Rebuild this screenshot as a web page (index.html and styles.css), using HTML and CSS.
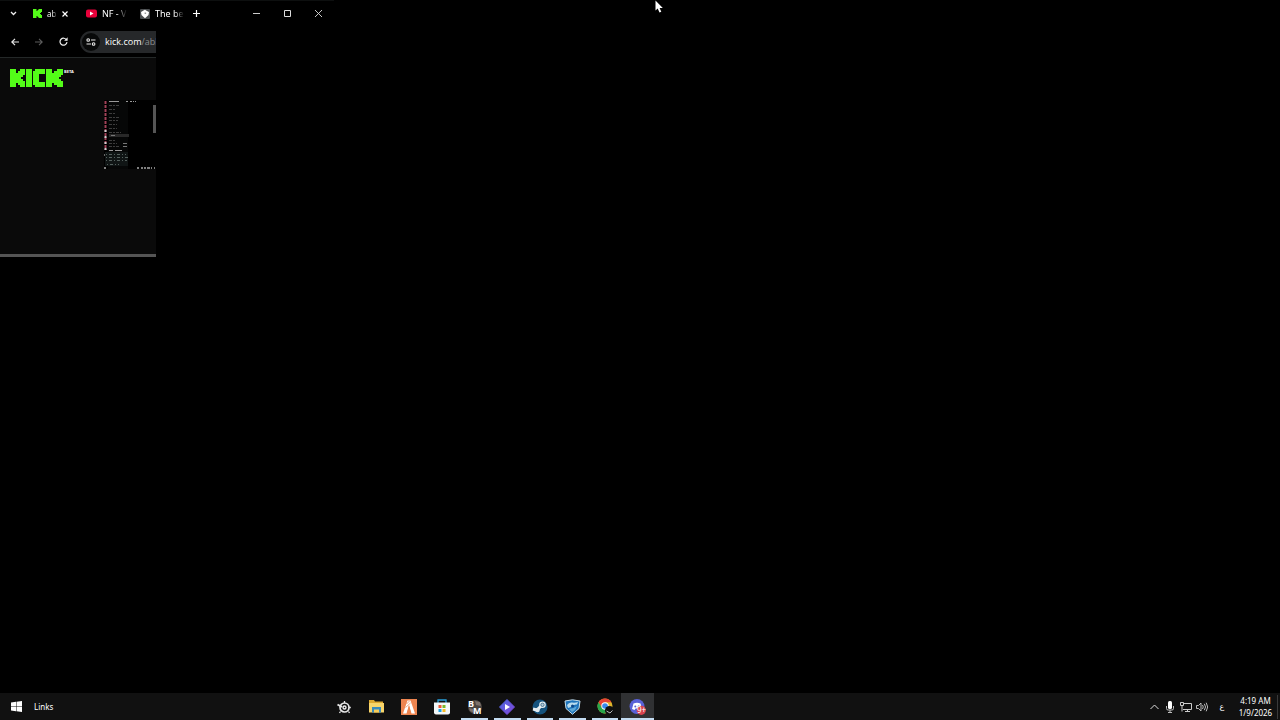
FILE: index.html
```html
<!DOCTYPE html>
<html lang="en">
<head>
    <meta charset="UTF-8">
    <meta name="viewport" content="width=device-width, initial-scale=1.0">
    <title>Desktop</title>
    <link rel="stylesheet" href="styles.css">
</head>
<body>
    <main class="desktop">
        <section class="browser">
            <!-- Tab strip -->
            <header class="tab-strip">
                <button class="tab-search" aria-label="Search tabs">
                    <svg width="7" height="5" viewBox="0 0 7 5"><path d="M1 1l2.5 2.5L6 1" fill="none" stroke="#eee" stroke-width="1.3"/></svg>
                </button>
                <div class="tab tab-kick">
                    <svg width="9" height="9" viewBox="0 0 9 9"><path d="M0 0h3.500v2h1V1h1V0H9v3H8v1H7v1h1v1h1v3H5.500V8h-1V7h-1v2H0z" fill="#53fc18"/></svg>
                    <a href="#" class="tab-title">ab</a>
                    <button class="tab-close" aria-label="Close tab">
                        <svg width="6" height="6" viewBox="0 0 6 6"><path d="M.5.5l5 5M5.500.500l-5 5" stroke="#fff" stroke-width="1.2"/></svg>
                    </button>
                </div>
                <div class="tab">
                    <svg width="11" height="9" viewBox="0 0 11 9"><rect y=".5" width="11" height="8" rx="2" fill="#e8003a"/><path d="M4 2.500v4l3.500-2z" fill="#fff"/></svg>
                    <a href="#" class="tab-title">NF - V</a>
                </div>
                <div class="tab">
                    <svg width="10" height="10" viewBox="0 0 10 10"><rect width="10" height="10" rx="1" fill="#4b4e50"/><path d="M1 3l2.500-1.500L5 .8l1.500 1L9 3 8.500 6 5 9.300 1.500 6z" fill="#fff"/><path d="M4.600 3.500h1.500v1.500H4.600z" fill="#999"/></svg>
                    <a href="#" class="tab-title">The be</a>
                </div>
                <button class="new-tab" aria-label="New tab">
                    <svg width="7" height="7" viewBox="0 0 7 7"><path d="M3.500 0v7M0 3.500h7" stroke="#fff" stroke-width="1.2"/></svg>
                </button>
                <div class="window-controls">
                    <button aria-label="Minimize"><svg width="7" height="7" viewBox="0 0 7 7"><path d="M0 3.500h7" stroke="#ccc"/></svg></button>
                    <button aria-label="Maximize"><svg width="7" height="7" viewBox="0 0 7 7"><path d="M.5.5h6v6h-6z" fill="none" stroke="#ddd"/></svg></button>
                    <button aria-label="Close"><svg width="7" height="7" viewBox="0 0 7 7"><path d="M0 0l7 7M7 0L0 7" stroke="#ddd" stroke-width=".9"/></svg></button>
                </div>
            </header>

            <div class="viewport">
                <!-- Address bar -->
                <nav class="toolbar">
                    <button aria-label="Back"><svg width="8" height="8" viewBox="0 0 8 8"><path d="M8 4H1M4 .8L.8 4 4 7.200" fill="none" stroke="#e8e8e8" stroke-width="1.200"/></svg></button>
                    <button aria-label="Forward"><svg width="8" height="8" viewBox="0 0 8 8"><path d="M0 4h7M4 .8L7.200 4 4 7.200" fill="none" stroke="#5c5c5c" stroke-width="1.100"/></svg></button>
                    <button aria-label="Reload"><svg width="9" height="9" viewBox="0 0 9 9"><path d="M7.600 3A3.500 3.500 0 1 0 8 5.200" fill="none" stroke="#eee" stroke-width="1.200"/><path d="M8.600.3v3.500H5.100z" fill="#eee"/></svg></button>
                    <div class="address">
                        <span class="site-info">
                            <svg width="10" height="8" viewBox="0 0 10 8"><g fill="none" stroke="#e8e8e8" stroke-width="1.100"><circle cx="2.200" cy="2" r="1.300"/><path d="M5 2h4.500M.5 6H5"/><circle cx="7.600" cy="6" r="1.300"/></g></svg>
                        </span>
                        <a href="#" class="url">kick.com<span>/abl</span></a>
                    </div>
                </nav>

                <!-- Kick page -->
                <div class="page">
                    <a href="#" class="logo" aria-label="Kick beta">
                        <svg width="53" height="18" viewBox="0 0 53 18">
                            <g fill="#53fc18">
                                <path d="M0 0h6v4h2V2h2V0h5v6h-2v2h-2v2h2v2h2v6h-5v-2H8v-2H6v4H0z"/>
                                <path d="M16 0h6v18h-6z"/>
                                <path d="M25 0h10v5h-6v8h6v5H25v-2h-2V2h2z"/>
                                <path d="M36 0h6v4h2V2h3V0h6v6h-2v2h-2v2h2v2h2v6h-6v-2h-3v-2h-2v4h-6z"/>
                            </g>
                        </svg>
                        <span>BETA</span>
                    </a>
                    <div class="stream">
                        <svg width="52" height="69" viewBox="0 0 52 69">
                            <rect width="52" height="69" fill="#000"/>
                            <path d="M4 0h20v69H4z" fill="#060707"/>
                            <path d="M1.500 1v49" stroke="#a14258" stroke-width="2" stroke-dasharray="3 1"/>
                            <path d="M1.500 30v26" stroke="#ccc" stroke-width="2" stroke-dasharray="2 4"/>
                            <path d="M5 1.500h10M22 1.500h2M26 1.500h2M29 1.500h1M31 1.500h1" stroke="#999"/>
                            <g stroke="#3d3d3d" stroke-dasharray="3 1 2 1">
                                <path d="M5 5.500h10M5 9.500h6M5 13.500h7M5 17.500h11M5 20.500h9M5 24.500h8M5 28.500h8M5 32.500h12M5 40.500h6M5 43.500h8M5 46.500h10"/>
                            </g>
                            <path d="M5 35.500h20" stroke="#292929" stroke-width="3"/>
                            <path d="M7 35.500h4M19 43.500h4M19 46.500h4" stroke="#777"/>
                            <path d="M1 52h23v14H1z" fill="#101515"/>
                            <path d="M5 50.500h4M11 50.500h7" stroke="#999" stroke-width="1.200"/>
                            <path d="M2 54.500h20M2 57.500h22M2 60.500h21M3 64.500h12" stroke="#54605d" stroke-dasharray="1 2 3 2"/>
                            <path d="M0 68h2M33 68h2M37 68h2M40 68h2M43 68h3M47 68h1M50 68h1" stroke="#aaa" stroke-width="1.500"/>
                            <path d="M50.500 5v28" stroke="#555" stroke-width="3"/>
                        </svg>
                    </div>
                    <div class="scrollbar"></div>
                </div>
            </div>
        </section>

        <svg class="cursor" width="9" height="13" viewBox="0 0 9 13"><path d="M.5.5v10l2.200-2 1.800 4 1.800-.8-1.700-3.800h3.200z" fill="#fff"/></svg>
    </main>

    <footer class="taskbar">
        <button class="start" aria-label="Start">
            <svg width="11" height="11" viewBox="0 0 11 11"><path d="M0 1.500L5 .8v4.400H0zM5.500.7L11 0v5.200H5.500zM0 5.700h5v4.500l-5-.7zM5.500 5.700H11V11l-5.500-.7z" fill="#fff"/></svg>
        </button>
        <a href="#" class="links">Links</a>

        <div class="apps">
            <button aria-label="SteelSeries">
                <svg width="14" height="14" viewBox="0 0 14 14"><circle cx="7.500" cy="7.500" r="4.500" fill="none" stroke="#e6e6e6" stroke-width="1.700"/><circle cx="7.500" cy="7.500" r="1.500" fill="none" stroke="#eee" stroke-width="1.400"/><path d="M.5 4.500L5 7" stroke="#e6e6e6" stroke-width="2"/><path d="M7.500 1v2M12 7.500h1.800M3.500 11.500l-1 1.500M11.500 11.500l1 1.500" stroke="#e6e6e6" stroke-width="1.300"/></svg>
            </button>
            <button aria-label="File Explorer">
                <svg width="15" height="13" viewBox="0 0 15 13"><path d="M0 0h5l1 1.500h8V4H0z" fill="#dda82f"/><path d="M0 3h15v9.500H0z" fill="#f8d56a"/><path d="M3 7h9v5.500h-2v-3H5v3H3z" fill="#398abb"/><path d="M5 10h5v2.500H5z" fill="#f5cb59"/></svg>
            </button>
            <button aria-label="FiveM">
                <svg width="16" height="16" viewBox="0 0 16 16"><path d="M0 0h16v16H0z" fill="#ee8550"/><path d="M6.500 1.500h3L14 14.500h-3.500L8 6l-2.500 8.500H2z" fill="#fff"/><path d="M5.500 5l3-3M4.500 8.500L9.500 4" stroke="#ee8550" stroke-width=".7"/><path d="M8 6.500l2 8H6z" fill="#ee8550"/></svg>
            </button>
            <button aria-label="Microsoft Store">
                <svg width="16" height="16" viewBox="0 0 16 16"><path d="M4 4V1h8v3" fill="none" stroke="#299fd9" stroke-width="1.300"/><path d="M0 3.500h16v10a2 2 0 0 1-2 2H2a2 2 0 0 1-2-2z" fill="#f3f7f8"/><path d="M4.500 6H7.500v3h-3z" fill="#ec5635"/><path d="M8.500 6h3v3h-3z" fill="#79b929"/><path d="M4.500 10h3v3h-3z" fill="#1ca0e4"/><path d="M8.500 10h3v3h-3z" fill="#f7bb22"/></svg>
            </button>
            <button class="open" aria-label="BM">
                <svg width="16" height="16" viewBox="0 0 16 16"><circle cx="8" cy="8" r="7" fill="#4a4542"/><path d="M8 2l5 1 1 4-5-1zM2 9l4 1 1 4-4-2z" fill="#7c716b"/><text x="1" y="8" class="icon-letter">B</text><text x="6" y="15" class="icon-letter">M</text></svg>
            </button>
            <button class="open" aria-label="Media player">
                <svg width="16" height="16" viewBox="0 0 16 16"><defs><linearGradient id="violet" x1="0" y1="0" x2="1" y2="1"><stop stop-color="#4966dc"/><stop offset="1" stop-color="#8447dd"/></linearGradient></defs><path d="M8 .5L15.500 8 8 15.500.5 8z" fill="url(#violet)" stroke="url(#violet)" stroke-linejoin="round"/><path d="M6 5v6l5-3z" fill="#fff"/></svg>
            </button>
            <button class="open" aria-label="Steam">
                <svg width="16" height="16" viewBox="0 0 16 16"><circle cx="8" cy="8" r="7.500" fill="#14527d"/><path d="M1 10l4 1 4-4" fill="none" stroke="#e7f0f4" stroke-width="3"/><circle cx="10.500" cy="5.800" r="3.300" fill="#e7f0f4"/><circle cx="10.500" cy="5.800" r="1.700" fill="#b1cad9" stroke="#235577" stroke-width=".7"/><circle cx="5.500" cy="11" r="2.300" fill="#dfe9ee"/></svg>
            </button>
            <button class="open" aria-label="Rocket League">
                <svg width="17" height="16" viewBox="0 0 17 16"><path d="M1 2L8.500.8 16 2l-1 7.500-6.500 5.800L2 9.500z" fill="#1f75bc" stroke="#c5ddea"/><path d="M3 6q2-3 5-2.500T14 3l-1 2.500Q9 5 7 8L4 9z" fill="#b9dcee"/><path d="M5 10q4 0 8-3l-2 4-3 2z" fill="#5fa9d8"/><circle cx="8.500" cy="7" r="1.500" fill="#0c4787"/></svg>
            </button>
            <button class="open" aria-label="Chrome">
                <svg width="17" height="17" viewBox="0 0 17 17"><circle cx="8" cy="8" r="7.500" fill="#dfb52b"/><path d="M1.500 4.250A7.500 7.500 0 0 1 14.500 4.250H8L4.800 9.900z" fill="#e74234"/><path d="M1.500 4.250A7.500 7.500 0 0 0 8 15.500L11.200 9.800H4.800z" fill="#28a64b"/><circle cx="8" cy="8" r="3.700" fill="#fff"/><circle cx="8" cy="8" r="2.800" fill="#398bec"/><circle cx="12.500" cy="12.500" r="4.500" fill="#101010"/><path d="M9.500 13l3.500 2 2.500-2.500" fill="none" stroke="#bbb"/></svg>
            </button>
            <button class="open active" aria-label="Discord">
                <svg width="17" height="16" viewBox="0 0 17 16"><circle cx="8" cy="7.500" r="7.500" fill="#5961d8"/><path d="M4.500 4.500Q8 3 11.500 4.500L13 10l-2.500 1L9.500 9.500h-3L5.500 11 3 10z" fill="#fff"/><circle cx="6.300" cy="7.400" r="1" fill="#5961d8"/><circle cx="9.700" cy="7.400" r="1" fill="#5961d8"/><circle cx="12.300" cy="11.300" r="4.600" fill="#d7424f"/><text x="8" y="14" class="badge">9+</text></svg>
            </button>
        </div>

        <div class="tray">
            <button aria-label="Show hidden icons"><svg width="9" height="6" viewBox="0 0 9 6"><path d="M.5 5l4-4 4 4" fill="none" stroke="#ddd"/></svg></button>
            <button aria-label="Microphone"><svg width="8" height="12" viewBox="0 0 8 12"><rect x="2" width="4" height="8" rx="1.500" fill="#fff"/><path d="M.5 5v2.500Q.5 9 2 9h4q1.500 0 1.500-1.500V5M4 9v3M2 11.500h4" fill="none" stroke="#bbb"/></svg></button>
            <button aria-label="Network"><svg width="12" height="10" viewBox="0 0 12 10"><path d="M4 1.500h7.500v6H3M5 9.500h5M7.500 7.500v2M.5.500v3h3v-3M2 3.500v6M.5.500h3" fill="none" stroke="#ccc"/></svg></button>
            <button aria-label="Volume"><svg width="12" height="10" viewBox="0 0 12 10"><path d="M.5 3.500h2L5 1v8L2.500 6.500h-2zM6.500 3q1.500 2 0 4M8.300 1.800q2.500 3.200 0 6.400M10.200.7q3 4.300 0 8.600" fill="none" stroke="#ccc" stroke-width=".9"/></svg></button>
        </div>
        <button class="language" lang="ar" aria-label="Arabic keyboard">ع</button>
        <div class="clock">
            <time>4:19 AM</time>
            <time datetime="2026-01-09">1/9/2026</time>
        </div>
    </footer>
</body>
</html>
```
FILE: styles.css
```css
* {
    box-sizing: border-box;
}
body {
    margin: 0;
    min-height: 100vh;
    display: flex;
    flex-direction: column;
    background: #000;
    color: #fff;
    font-family: "Noto Sans", "Open Sans", sans-serif;
    font-size: 9px;
    line-height: 12px;
}
button {
    display: flex;
    align-items: center;
    justify-content: center;
    padding: 0;
    border: 0;
    background: none;
    color: inherit;
    font: inherit;
}
a {
    color: inherit;
    text-decoration: none;
}
svg {
    display: block;
    flex: none;
}
.desktop {
    flex: 1;
    position: relative;
}
.browser {
    width: 26%;
    min-width: 334px;
}

/* Tab strip */
.tab-strip {
    display: flex;
    align-items: center;
    height: 26px;
    border-top: 1px solid #0d0f0f;
}
.tab-search {
    width: 27px;
    height: 25px;
}
.tab {
    display: flex;
    align-items: center;
    gap: 5px;
    width: 54px;
    padding-left: 5px;
}
.tab-title {
    white-space: nowrap;
    -webkit-mask-image: linear-gradient(to left, transparent, #000 10px);
    mask-image: linear-gradient(to left, transparent, #000 10px);
}
.tab-kick {
    padding-left: 6px;
}
.tab-kick .tab-title {
    width: 10px;
    font-size: 8px;
    -webkit-mask-image: linear-gradient(to left, transparent, #000 5px);
    mask-image: linear-gradient(to left, transparent, #000 5px);
}
.tab-close {
    width: 6px;
}
.new-tab {
    width: 15px;
}
.window-controls {
    display: flex;
    margin-left: auto;
}
.window-controls button {
    width: 31px;
    height: 25px;
}

/* Toolbar and page */
.viewport {
    width: 156px;
    overflow: hidden;
}
.toolbar {
    display: flex;
    align-items: center;
    height: 32px;
    padding-left: 3px;
    border-bottom: 1px solid #242828;
}
.toolbar button {
    width: 24px;
    height: 24px;
    flex: none;
}
.address {
    flex: 1;
    display: flex;
    align-items: center;
    gap: 5px;
    height: 22px;
    margin-left: 5px;
    padding-left: 2px;
    border-radius: 11px 0 0 11px;
    background: #26282a;
}
.site-info {
    display: flex;
    align-items: center;
    justify-content: center;
    flex: none;
    width: 18px;
    height: 18px;
    border-radius: 50%;
    background: #080909;
}
.url {
    white-space: nowrap;
    font-family: "Open Sans", sans-serif;
}
.url span {
    color: #8b8e90;
}
.page {
    background: #0a0a0a;
}
.logo {
    display: flex;
    gap: 1px;
    padding: 11px 0 0 10px;
}
.logo span {
    font-size: 4px;
    font-weight: 700;
    line-height: 5px;
}
.stream {
    display: flex;
    justify-content: flex-end;
    padding: 13px 0 85px;
}
.scrollbar {
    height: 3px;
    background: #555;
}
.cursor {
    position: absolute;
    top: 0;
    left: 655px;
}

/* Taskbar */
.taskbar {
    display: flex;
    align-items: center;
    height: 27px;
    background: #111;
}
.start {
    width: 32px;
    height: 27px;
}
.links {
    width: 296px;
    padding-left: 2px;
    font-size: 8px;
}
.apps {
    display: grid;
    grid-template-columns: repeat(10, 1fr);
    width: 326px;
    height: 27px;
}
.apps button {
    position: relative;
}
.open::after {
    content: "";
    position: absolute;
    right: 3px;
    bottom: 0;
    left: 3px;
    height: 2px;
    background: #c3dcf2;
}
.active {
    background: #303133;
}
.active::after {
    right: 0;
    left: 0;
}
.icon-letter {
    font-size: 9px;
    font-weight: 700;
    fill: #fff;
}
.badge {
    font-size: 8px;
    fill: #fff;
}
.tray {
    display: flex;
    margin-left: auto;
}
.tray button {
    width: 16px;
    height: 27px;
}
.language {
    width: 24px;
    height: 27px;
    font-family: "DejaVu Sans", sans-serif;
    font-size: 8px;
}
.clock {
    display: flex;
    flex-direction: column;
    align-items: center;
    width: 44px;
    margin-right: 2px;
    border-right: 1px solid #3a3a3a;
    font-size: 8px;
}
```
